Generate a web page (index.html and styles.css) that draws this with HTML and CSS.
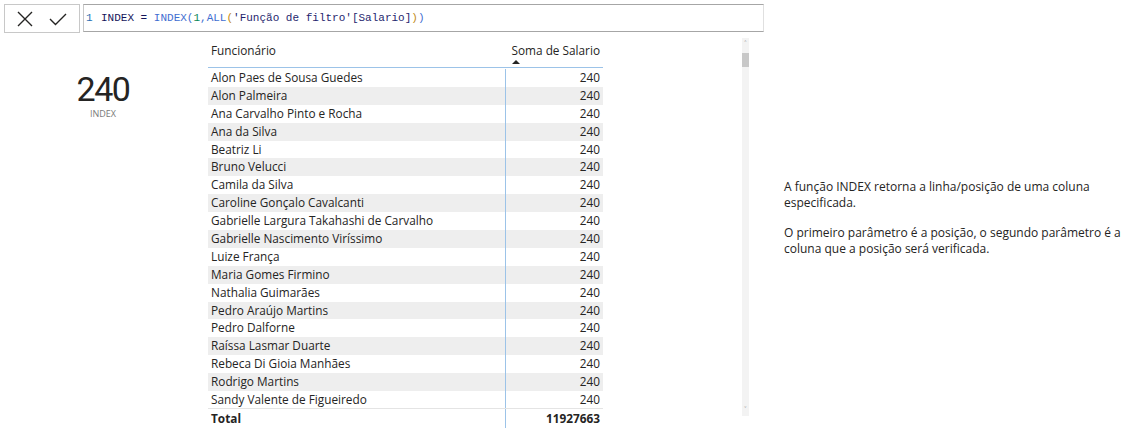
FILE: index.html
```html
<!DOCTYPE html>
<html lang="pt">
<head>
<meta charset="utf-8">
<link rel="stylesheet" href="styles.css">
</head>
<body>
<div class="topbar">
  <div class="btns">
    <svg class="ico" width="18" height="18" viewBox="0 0 18 18"><path d="M2 2 L16 16 M16 2 L2 16" stroke="#252423" stroke-width="1.4" fill="none"/></svg>
    <svg class="ico" width="20" height="18" viewBox="0 0 20 18"><path d="M2 9 L7.5 14.5 L18 4" stroke="#252423" stroke-width="1.4" fill="none"/></svg>
  </div>
  <div class="formula">
    <span class="ln">1</span><span class="c-m">INDEX =</span>&nbsp;<span class="c-f">INDEX(</span><span class="c-n">1</span><span class="c-f">,ALL</span><span class="c-p1">(</span><span class="c-c">'Função de filtro'[Salario]</span><span class="c-p1">)</span><span class="c-f">)</span>
  </div>
</div>
<div class="main">
  <div class="card">
    <div class="card-val">240</div>
    <div class="card-lbl">INDEX</div>
  </div>
  <div class="visual">
    <div class="tbl">
      <div class="thead">
        <div class="c1">Funcionário</div>
        <div class="c2 hcol"><span>Soma de Salario</span><span class="arrow"></span></div>
      </div>
      <div class="tbody">
        <div class="row"><div class="c1">Alon Paes de Sousa Guedes</div><div class="c2">240</div></div>
        <div class="row alt"><div class="c1">Alon Palmeira</div><div class="c2">240</div></div>
        <div class="row"><div class="c1">Ana Carvalho Pinto e Rocha</div><div class="c2">240</div></div>
        <div class="row alt"><div class="c1">Ana da Silva</div><div class="c2">240</div></div>
        <div class="row"><div class="c1">Beatriz Li</div><div class="c2">240</div></div>
        <div class="row alt"><div class="c1">Bruno Velucci</div><div class="c2">240</div></div>
        <div class="row"><div class="c1">Camila da Silva</div><div class="c2">240</div></div>
        <div class="row alt"><div class="c1">Caroline Gonçalo Cavalcanti</div><div class="c2">240</div></div>
        <div class="row"><div class="c1">Gabrielle Largura Takahashi de Carvalho</div><div class="c2">240</div></div>
        <div class="row alt"><div class="c1">Gabrielle Nascimento Viríssimo</div><div class="c2">240</div></div>
        <div class="row"><div class="c1">Luize França</div><div class="c2">240</div></div>
        <div class="row alt"><div class="c1">Maria Gomes Firmino</div><div class="c2">240</div></div>
        <div class="row"><div class="c1">Nathalia Guimarães</div><div class="c2">240</div></div>
        <div class="row alt"><div class="c1">Pedro Araújo Martins</div><div class="c2">240</div></div>
        <div class="row"><div class="c1">Pedro Dalforne</div><div class="c2">240</div></div>
        <div class="row alt"><div class="c1">Raíssa Lasmar Duarte</div><div class="c2">240</div></div>
        <div class="row"><div class="c1">Rebeca Di Gioia Manhães</div><div class="c2">240</div></div>
        <div class="row alt"><div class="c1">Rodrigo Martins</div><div class="c2">240</div></div>
        <div class="row last"><div class="c1">Sandy Valente de Figueiredo</div><div class="c2">240</div></div>
        <div class="row total"><div class="c1">Total</div><div class="c2">11927663</div></div>
      </div>
    </div>
    <div class="scroll">
      <div class="sarrow">&#708;</div>
      <div class="strack"><div class="thumb"></div></div>
      <div class="sarrow">&#709;</div>
    </div>
  </div>
  <div class="note">
    <p>A função INDEX retorna a linha/posição de uma coluna<br>especificada.</p>
    <p>O primeiro parâmetro é a posição, o segundo parâmetro é a<br>coluna que a posição será verificada.</p>
  </div>
</div>
</body>
</html>
```

FILE: styles.css
```css
html, body {
  margin: 0;
  padding: 0;
  background: #ffffff;
}
body {
  width: 1141px;
  height: 433px;
  overflow: hidden;
  font-family: "Open Sans", "Noto Sans", sans-serif;
  color: #252423;
}
.topbar {
  display: flex;
  gap: 3px;
  padding: 4px 0 0 4px;
  height: 28px;
}
.btns {
  width: 74px;
  height: 26px;
  border: 1px solid #c8c8c8;
  display: flex;
  align-items: center;
  justify-content: center;
  gap: 14px;
  padding-top: 1px;
}
.formula {
  width: 677px;
  height: 26px;
  border: 1px solid #a6a6a6;
  border-left-color: #c8c8c8;
  border-right-color: #e0e0e0;
  font-family: "Liberation Mono", "DejaVu Sans Mono", monospace;
  font-size: 11px;
  line-height: 26px;
  padding-left: 2px;
  white-space: nowrap;
  color: #1a1a5e;
}
.ln { color: #2b6fb2; display: inline-block; width: 15px; }
.c-m { color: #14145a; }
.c-f { color: #3f6ed1; }
.c-n { color: #098658; }
.c-p1 { color: #c28a14; }
.c-c { color: #1f1f6e; }

.main {
  display: flex;
  height: 401px;
}
.card {
  width: 206px;
  display: flex;
  flex-direction: column;
  align-items: center;
  padding-top: 40px;
}
.card-val {
  font-family: Roboto, "Open Sans", sans-serif;
  font-size: 34px;
  line-height: 34px;
  letter-spacing: -1.5px;
  color: #252423;
}
.card-lbl {
  font-family: "Open Sans", sans-serif;
  font-size: 9px;
  color: #7a7a7a;
  margin-top: 1px;
}
.visual {
  display: flex;
  padding-left: 2px;
  padding-top: 8px;
}
.tbl {
  width: 395px;
  font-size: 11.8px;
}
.thead {
  display: flex;
  height: 27px;
  border-bottom: 1px solid #9cc3e8;
}
.thead .c1 {
  padding: 2px 0 0 3px;
  width: 294px;
}
.hcol {
  display: flex;
  flex-direction: column;
  align-items: flex-start;
  padding: 2px 3px 0 5px;
  margin-left: auto;
}
.arrow {
  width: 0;
  height: 0;
  border-left: 4px solid transparent;
  border-right: 4px solid transparent;
  border-bottom: 4px solid #252423;
  margin: 2px 0 0 0;
}
.row {
  display: flex;
  height: 17.9px;
  line-height: 17.9px;
  white-space: nowrap;
}
.row:first-child { margin-top: 1px; }
.row.alt { background: #eeeeee; }
.row.last { border-bottom: 1px solid #e4e4e4; height: 16.9px; }
.row .c1 {
  width: 294px;
  padding-left: 3px;
  border-right: 1px solid #9cc3e8;
}
.row .c2 {
  flex: 1;
  text-align: right;
  padding-right: 3px;
}
.row.total {
  font-weight: 700;
  height: 19px;
  line-height: 19px;
}
.scroll {
  margin-left: 139px;
  width: 7px;
  display: flex;
  flex-direction: column;
  background: #f3f3f3;
  height: 378px;
  margin-top: -2px;
}
.sarrow {
  font-size: 8px;
  line-height: 12px;
  color: #9a9a9a;
  text-align: center;
  height: 12px;
}
.strack {
  flex: 1;
  padding-top: 3px;
}
.thumb {
  height: 14px;
  background: #c8c8c8;
}
.note {
  margin-left: 35px;
  padding-top: 147px;
  font-family: "Open Sans", sans-serif;
  font-size: 12px;
  line-height: 16px;
  white-space: nowrap;
  color: #252423;
}
.note p {
  margin: 0 0 14px 0;
}
```
